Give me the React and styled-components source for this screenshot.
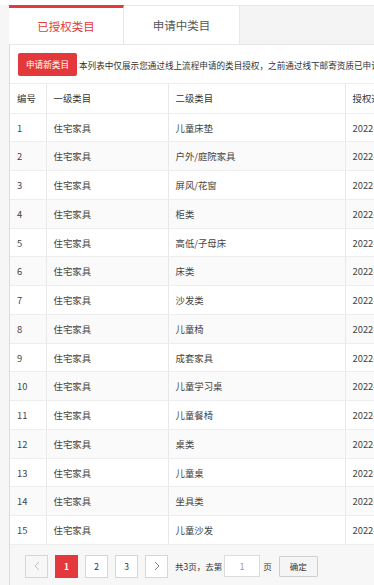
import React from "react";
import styled, { createGlobalStyle } from "styled-components";

const Global = createGlobalStyle`
  html, body { margin: 0; padding: 0; overflow: hidden; }
  body { font-family: "Noto Sans CJK SC", "Noto Sans", sans-serif; }
`;

const Page = styled.div`
  min-height: 585px;
  padding: 5px 0 0 9px;
  background: linear-gradient(#fff 0 5px, #f6f6f6 5px);
  box-sizing: border-box;
  width: 600px;
`;

const TabBar = styled.div`
  display: flex;
  height: 40px;
  background: #f4f4f4;
  border-top: 1px solid #e8e8e8;
  border-bottom: 1px solid #e6e6e6;
  box-sizing: border-box;
`;

const Tab = styled.div`
  width: ${(p) => p.$w}px;
  display: flex;
  align-items: center;
  justify-content: center;
  background: #fff;
  font-size: 11.5px;
  color: ${(p) => (p.$active ? "#e4393c" : "#555")};
  border-top: ${(p) => (p.$active ? "3px solid #e4393c" : "none")};
  margin-top: ${(p) => (p.$active ? "-1px" : "0")};
  border-right: 1px solid #e8e8e8;
  box-sizing: border-box;
  padding-bottom: ${(p) => (p.$active ? "1px" : "0")};
`;

const Panel = styled.div`
  background: #fff;
  border-left: 1px solid #dcdcdc;
`;

const Toolbar = styled.div`
  display: flex;
  align-items: center;
  padding: 8px 0 7px 8px;
  white-space: nowrap;
`;

const RedButton = styled.button`
  height: 23px;
  padding: 0 8px;
  border: none;
  border-radius: 2px;
  background: #e4393c;
  color: #fff;
  font-family: inherit;
  font-size: 8.6px;
  line-height: 23px;
  cursor: pointer;
  flex: none;
`;

const Desc = styled.span`
  margin-left: 2px;
  font-size: 8.6px;
  color: #333;
`;

const Table = styled.table`
  border-collapse: collapse;
  table-layout: fixed;
  width: 530px;
  font-size: 9.4px;
`;

const Th = styled.th`
  height: 28.7px;
  padding: 0 0 0 7px;
  text-align: left;
  font-weight: normal;
  color: #333;
  border-top: 1px solid #eeeeee;
  border-bottom: 1px solid #eeeeee;
  border-right: 1px solid #e8e8e8;
  white-space: nowrap;
  overflow: hidden;
`;

const Tr = styled.tr`
  height: 28.75px;
  background: ${(p) => (p.$even ? "#fafafa" : "#fff")};
`;

const Td = styled.td`
  padding: 0 0 0 7px;
  color: #444;
  border-bottom: 1px solid #eeeeee;
  border-right: 1px solid #e8e8e8;
  white-space: nowrap;
  overflow: hidden;
`;

const Pager = styled.div`
  display: flex;
  align-items: center;
  gap: 7px;
  padding: 10px 0 20px 15px;
  background: #f7f7f7;
  font-size: 8.5px;
  color: #333;
`;

const PageBtn = styled.div`
  width: 23px;
  height: 23px;
  box-sizing: border-box;
  display: flex;
  align-items: center;
  justify-content: center;
  border: 1px solid ${(p) => (p.$active ? "#e4393c" : "#d6d6d6")};
  background: ${(p) => (p.$active ? "#e4393c" : p.$disabled ? "#f7f7f7" : "#fff")};
  color: ${(p) => (p.$active ? "#fff" : "#333")};
  font-weight: ${(p) => (p.$active ? "bold" : "normal")};
  font-size: 8.5px;
`;

const GoText = styled.span`
  display: flex;
  align-items: center;
  gap: 1px;
  white-space: nowrap;
`;

const PageInput = styled.div`
  width: 36px;
  height: 22px;
  box-sizing: border-box;
  border: 1px solid #dcdcdc;
  background: #fff;
  color: #999;
  display: flex;
  align-items: center;
  justify-content: center;
  margin: 0 2px 0 1px;
`;

const ConfirmBtn = styled.div`
  width: 39px;
  height: 21px;
  box-sizing: border-box;
  border: 1px solid #d0d0d0;
  background: #f5f5f5;
  display: flex;
  align-items: center;
  justify-content: center;
  border-radius: 1px;
`;

const Chevron = ({ dir, color }) => (
  <svg width="6" height="10" viewBox="0 0 6 10">
    <path
      d={dir === "left" ? "M5 1 L1 5 L5 9" : "M1 1 L5 5 L1 9"}
      fill="none"
      stroke={color}
      strokeWidth="0.9"
    />
  </svg>
);

const rows = [
  "儿童床垫",
  "户外/庭院家具",
  "屏风/花窗",
  "柜类",
  "高低/子母床",
  "床类",
  "沙发类",
  "儿童椅",
  "成套家具",
  "儿童学习桌",
  "儿童餐椅",
  "桌类",
  "儿童桌",
  "坐具类",
  "儿童沙发",
];

export default function App() {
  return (
    <>
      <Global />
      <Page>
        <TabBar>
          <Tab $active $w={115}>已授权类目</Tab>
          <Tab $w={116}>申请中类目</Tab>
        </TabBar>
        <Panel>
          <Toolbar>
            <RedButton>申请新类目</RedButton>
            <Desc>
              本列表中仅展示您通过线上流程申请的类目授权，之前通过线下邮寄资质已申请的类目授权不在此列表中展示
            </Desc>
          </Toolbar>
          <Table>
            <colgroup>
              <col style={{ width: 36 }} />
              <col style={{ width: 122 }} />
              <col style={{ width: 177 }} />
              <col style={{ width: 195 }} />
            </colgroup>
            <thead>
              <tr>
                <Th>编号</Th>
                <Th>一级类目</Th>
                <Th>二级类目</Th>
                <Th>授权通过时间</Th>
              </tr>
            </thead>
            <tbody>
              {rows.map((name, i) => (
                <Tr key={i} $even={i % 2 === 1}>
                  <Td>{i + 1}</Td>
                  <Td>住宅家具</Td>
                  <Td>{name}</Td>
                  <Td>2022-03-15 10:26:41</Td>
                </Tr>
              ))}
            </tbody>
          </Table>
          <Pager>
            <PageBtn $disabled>
              <Chevron dir="left" color="#bbb" />
            </PageBtn>
            <PageBtn $active>1</PageBtn>
            <PageBtn>2</PageBtn>
            <PageBtn>3</PageBtn>
            <PageBtn>
              <Chevron dir="right" color="#777" />
            </PageBtn>
            <GoText>
              共3页，去第
              <PageInput>1</PageInput>页
            </GoText>
            <ConfirmBtn>确定</ConfirmBtn>
          </Pager>
        </Panel>
      </Page>
    </>
  );
}
